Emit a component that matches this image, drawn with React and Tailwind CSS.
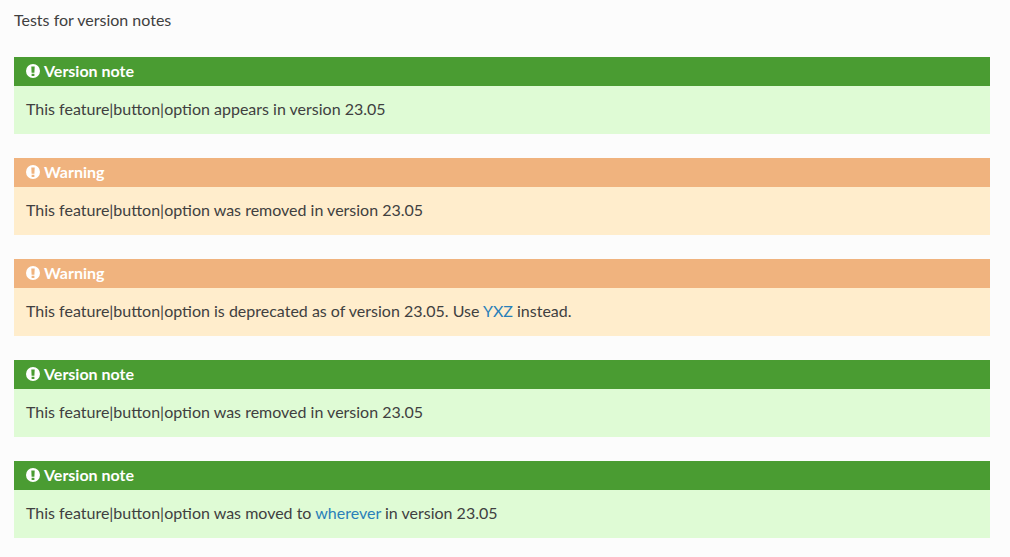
const NOTES = [
  {
    kind: "note",
    body: "This feature|button|option appears in version 23.05",
  },
  {
    kind: "warning",
    body: "This feature|button|option was removed in version 23.05",
  },
  {
    kind: "warning",
    body: (
      <>
        This feature|button|option is deprecated as of version 23.05. Use{" "}
        <a href="#" className="text-[#2980b9]">YXZ</a> instead.
      </>
    ),
  },
  {
    kind: "note",
    body: "This feature|button|option was removed in version 23.05",
  },
  {
    kind: "note",
    body: (
      <>
        This feature|button|option was moved to{" "}
        <a href="#" className="text-[#2980b9]">wherever</a> in version 23.05
      </>
    ),
  },
];

// Solid circle with the exclamation mark cut out, heavier than the icon packages' version
function ExclamationIcon() {
  return (
    <svg viewBox="0 0 14 14" className="mt-px h-[14px] w-[14px]" aria-hidden="true">
      <path
        fill="currentColor"
        fillRule="evenodd"
        d="M7 0a7 7 0 1 1 0 14A7 7 0 0 1 7 0ZM5.3 2.6l.3 6.2h2.8l.3-6.2ZM5.6 9.7v2.2h2.8V9.7Z"
      />
    </svg>
  );
}

function Admonition({ kind, children }) {
  const isNote = kind === "note";
  return (
    <div className={isNote ? "bg-[#dffbd5]" : "bg-[#ffedcc]"}>
      <div
        className={`flex h-[29px] items-center gap-1 px-3 pb-0.5 font-bold text-white ${
          isNote ? "bg-[#4a9c32]" : "bg-[#f0b37e]"
        }`}
      >
        <ExclamationIcon />
        <span>{isNote ? "Version note" : "Warning"}</span>
      </div>
      <p className="flex h-12 items-center px-3 pb-0.5">
        <span>{children}</span>
      </p>
    </div>
  );
}

export default function App() {
  return (
    <div className="h-[557px] overflow-hidden bg-[#fcfcfc] pl-[14px] pr-5 font-['Lato',sans-serif] text-base text-[#404040]">
      <p className="flex h-[57px] items-start pt-2">Tests for version notes</p>
      <div className="flex flex-col gap-6">
        {NOTES.map((note, i) => (
          <Admonition key={i} kind={note.kind}>
            {note.body}
          </Admonition>
        ))}
      </div>
    </div>
  );
}
